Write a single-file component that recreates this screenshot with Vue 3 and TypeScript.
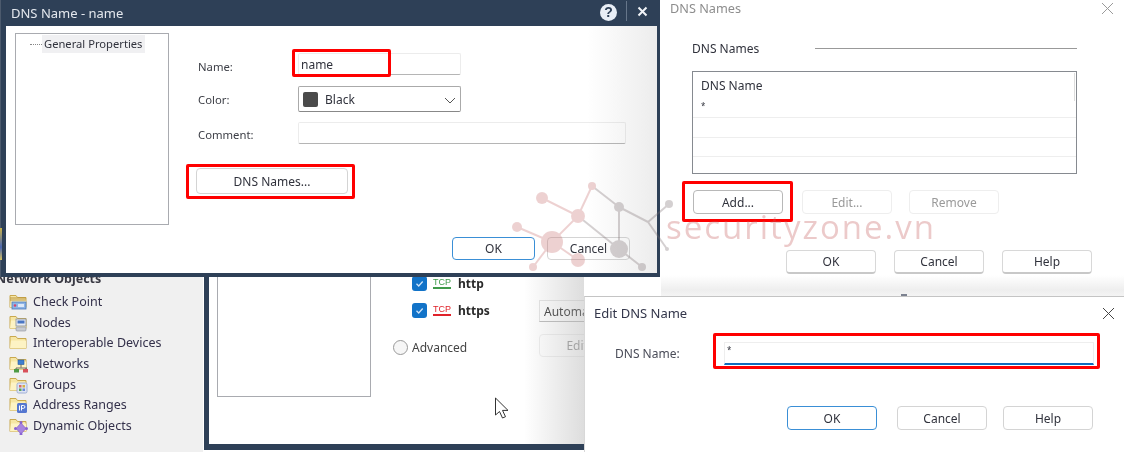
<script setup lang="ts">
interface NetItem { name: string; kind: string }
const netItems: NetItem[] = [
  { name: 'Check Point', kind: 'cp' },
  { name: 'Nodes', kind: 'node' },
  { name: 'Interoperable Devices', kind: 'plain' },
  { name: 'Networks', kind: 'net' },
  { name: 'Groups', kind: 'group' },
  { name: 'Address Ranges', kind: 'ip' },
  { name: 'Dynamic Objects', kind: 'dyn' },
]
const redNodes = [[542, 198, 6], [517, 227, 5], [552, 242, 11], [578, 216, 7], [578, 260, 7], [533, 267, 4], [592, 186, 4]]
const grayNodes = [[619, 207, 5], [619, 249, 9], [642, 267, 4], [669, 204, 4], [667, 249, 2]]
const redLinks = [[542, 198, 578, 216], [517, 227, 552, 242], [552, 242, 578, 216], [578, 216, 592, 186], [552, 242, 533, 267], [552, 242, 578, 260]]
const grayLinks = [[592, 186, 619, 207], [619, 207, 648, 222], [648, 222, 669, 204], [648, 222, 667, 249], [619, 207, 619, 249], [578, 216, 619, 249], [619, 249, 642, 267]]
</script>

<template>
  <div class="canvas">
    <!-- left tree behind the dialogs -->
    <aside class="objects">
      <h3 class="objects-title">Network Objects</h3>
      <ul class="objects-list">
        <li v-for="item in netItems" :key="item.name" class="objects-item">
          <svg class="folder" width="19" height="19" viewBox="0 0 19 19">
            <path d="M1 3.5h6l1.5 2H17v10H1z" fill="#f6e6a4" stroke="#c9a94f" stroke-width="1" />
            <path d="M2 7.5h15v8H1z" fill="#fdf3c4" />
            <template v-if="item.kind === 'cp'">
              <path d="M1 6h16M1 8h16" stroke="#b8923c" stroke-width="1" />
              <rect x="3" y="10" width="14" height="7" fill="#8db4e6" stroke="#4c79b8" stroke-width=".8" />
              <circle cx="6" cy="13.5" r="1.3" fill="#d8436c" />
              <rect x="9" y="12" width="6" height="3" fill="#dce8f8" />
            </template>
            <template v-else-if="item.kind === 'node'">
              <rect x="7" y="6" width="10" height="7" fill="#e8ecf2" stroke="#848d9c" stroke-width=".8" />
              <rect x="8.500" y="7.500" width="7" height="3" fill="#4a76c4" />
              <rect x="7" y="14" width="10" height="4" rx="1" fill="#c8cbd1" stroke="#8d929b" stroke-width=".6" />
            </template>
            <template v-else-if="item.kind === 'net'">
              <rect x="9" y="6" width="6" height="4.500" fill="#3f7fd0" stroke="#2a5a9c" stroke-width=".6" />
              <path d="M12 10.500v3M7 14h11M7 14v1M17 14v1" stroke="#4a4a4a" stroke-width=".8" fill="none" />
              <rect x="5" y="15" width="5" height="3.500" fill="#4d9a45" />
              <rect x="14" y="15" width="5" height="3.500" fill="#d8505a" />
            </template>
            <template v-else-if="item.kind === 'group'">
              <rect x="8" y="8" width="10" height="10" rx="1.500" fill="#dfe5f3" stroke="#8ea1cf" stroke-width=".8" />
              <rect x="10" y="10" width="2.500" height="2.500" fill="#d96a6a" />
              <rect x="13.500" y="10" width="2.500" height="2.500" fill="#d6b045" />
              <rect x="10" y="13.500" width="2.500" height="2.500" fill="#5aa65a" />
              <rect x="13.500" y="13.500" width="2.500" height="2.500" fill="#6a8ad8" />
            </template>
            <template v-else-if="item.kind === 'ip'">
              <rect x="8" y="8" width="10" height="10" rx="1.500" fill="#5577d0" />
              <path d="M10.500 10.500v5M12.500 15.500v-5h2a1.300 1.300 0 0 1 0 2.800h-2" stroke="#fff" stroke-width="1" fill="none" />
            </template>
            <template v-else-if="item.kind === 'dyn'">
              <path d="M12 7l5 5.500-5 5.500-5-5.500z" fill="#a884e0" stroke="#7d57c4" stroke-width=".6" />
              <circle cx="12" cy="6.500" r="1.500" fill="#8a63d2" />
              <circle cx="12" cy="18" r="1.500" fill="#8a63d2" />
              <circle cx="6.500" cy="12.500" r="1.500" fill="#8a63d2" />
              <circle cx="17.500" cy="12.500" r="1.500" fill="#8a63d2" />
            </template>
          </svg>
          <span>{{ item.name }}</span>
        </li>
      </ul>
    </aside>

    <!-- background properties window -->
    <section class="backdrop">
      <div class="backdrop-box"></div>
      <div class="backdrop-form">
        <div class="svc">
          <span class="check"><svg width="11" height="11" viewBox="0 0 11 11"><path d="M2.500 5.800l2.200 2.200 4-4.500" stroke="#cfe4fa" stroke-width="1.300" fill="none" /></svg></span>
          <span class="tcp tcp-green">TCP</span>
          <b class="svc-name">http</b>
        </div>
        <div class="svc svc-second">
          <span class="check"><svg width="11" height="11" viewBox="0 0 11 11"><path d="M2.500 5.800l2.200 2.200 4-4.500" stroke="#cfe4fa" stroke-width="1.300" fill="none" /></svg></span>
          <span class="tcp tcp-red">TCP</span>
          <b class="svc-name">https</b>
          <span class="auto">Automatic</span>
        </div>
        <div class="adv">
          <span class="radio"></span>
          <span class="adv-label">Advanced</span>
          <span class="adv-btn">Edit...</span>
        </div>
      </div>
      <svg class="cursor" width="16" height="23" viewBox="0 0 16 23">
        <path d="M1.500 1v17l4-3.500 3 6.500 3-1.300-3-6.300h5.500z" fill="#fff" stroke="#333" stroke-width="1" />
      </svg>
      <div class="shade-right"></div>
    </section>

    <!-- main dialog -->
    <section class="main-dlg">
      <span class="sliver"></span>
      <header class="main-title">
        <span class="main-title-text">DNS Name - name</span>
        <span class="help">?</span>
        <span class="sep"></span>
        <svg class="main-close" width="11" height="11" viewBox="0 0 11 11">
          <path d="M1.500 1.500l8 8M9.500 1.500l-8 8" stroke="#f1f4f8" stroke-width="2" />
        </svg>
      </header>
      <div class="main-body">
        <div class="tree">
          <div class="tree-row"><span class="tree-dots"></span><span class="tree-sel">General Properties</span></div>
        </div>
        <div class="form">
          <div class="form-grid">
            <label class="lbl lbl-low">Name:</label>
            <div class="marked">
              <div class="field field-short">name</div>
              <span class="mark mark-name"></span>
            </div>
            <label class="lbl">Color:</label>
            <div class="field field-short select">
              <span class="swatch"></span>
              <span>Black</span>
              <svg class="chev" width="12" height="7" viewBox="0 0 12 7"><path d="M1 1l5 5 5-5" stroke="#555" fill="none" /></svg>
            </div>
            <label class="lbl lbl-low">Comment:</label>
            <div class="field field-long"></div>
          </div>
          <div class="marked dns-wrap">
            <button class="btn dns-btn" type="button">DNS Names...</button>
            <span class="mark mark-dns"></span>
          </div>
          <div class="main-foot">
            <button class="btn btn-primary main-btn" type="button">OK</button>
            <button class="btn main-btn" type="button">Cancel</button>
          </div>
        </div>
        <div class="shade-main"></div>
      </div>
    </section>

    <!-- DNS Names window -->
    <section class="names-dlg">
      <header class="names-title">
        <span>DNS Names</span>
        <svg width="13" height="13" viewBox="0 0 13 13"><path d="M1 1l11 11M12 1L1 12" stroke="#9a9a9a" stroke-width="1" /></svg>
      </header>
      <div class="names-section">
        <span>DNS Names</span>
        <span class="names-line"></span>
      </div>
      <div class="names-list">
        <div class="names-head">DNS Name</div>
        <div class="names-row names-row-first">*</div>
        <div class="names-row"></div>
        <div class="names-row"></div>
        <div class="names-scroll"></div>
      </div>
      <div class="names-actions">
        <div class="marked">
          <button class="btn names-btn btn-strong" type="button">Add...</button>
          <span class="mark mark-add"></span>
        </div>
        <button class="btn names-btn btn-off" type="button">Edit...</button>
        <button class="btn names-btn btn-off" type="button">Remove</button>
      </div>
      <div class="names-foot">
        <button class="btn names-btn btn-raised" type="button">OK</button>
        <button class="btn names-btn btn-raised" type="button">Cancel</button>
        <button class="btn names-btn btn-raised" type="button">Help</button>
      </div>
      <span class="names-dot"></span>
    </section>

    <!-- Edit DNS Name window -->
    <section class="edit-dlg">
      <header class="edit-title">
        <span>Edit DNS Name</span>
        <svg width="13" height="13" viewBox="0 0 13 13"><path d="M1 1l11 11M12 1L1 12" stroke="#444" stroke-width="1" /></svg>
      </header>
      <div class="edit-row">
        <label class="edit-label">DNS Name:</label>
        <div class="marked">
          <div class="edit-input">*</div>
          <span class="mark mark-edit"></span>
        </div>
      </div>
      <div class="edit-foot">
        <button class="btn btn-primary edit-btn" type="button">OK</button>
        <button class="btn edit-btn" type="button">Cancel</button>
        <button class="btn edit-btn edit-btn-last" type="button">Help</button>
      </div>
    </section>

    <!-- watermark over everything -->
    <svg class="wm" width="1124" height="452" viewBox="0 0 1124 452">
      <line v-for="(l, i) in redLinks" :key="'r' + i" :x1="l[0]" :y1="l[1]" :x2="l[2]" :y2="l[3]" stroke="#c97474" stroke-width="2" />
      <line v-for="(l, i) in grayLinks" :key="'g' + i" :x1="l[0]" :y1="l[1]" :x2="l[2]" :y2="l[3]" stroke="#7d6f72" stroke-width="2" />
      <circle v-for="(n, i) in redNodes" :key="'rn' + i" :cx="n[0]" :cy="n[1]" :r="n[2]" fill="#c97474" />
      <circle v-for="(n, i) in grayNodes" :key="'gn' + i" :cx="n[0]" :cy="n[1]" :r="n[2]" fill="#7d6f72" />
    </svg>
    <span class="wm-text">securityzone.vn</span>
  </div>
</template>

<style>
html, body { margin: 0; background: #fff; }
</style>

<style scoped>
.canvas {
  position: relative;
  width: 1124px;
  height: 452px;
  overflow: hidden;
  background: #fff;
  font-family: "Noto Sans", "Open Sans", sans-serif;
  font-size: 12px;
  color: #30323c;
  filter: blur(0.35px);
}
.btn {
  font: inherit;
  color: inherit;
  background: #fff;
  border: 1px solid #d4d4d4;
  border-radius: 4px;
  padding: 0;
  display: block;
  box-sizing: border-box;
}
.btn-primary { border: 1.500px solid #3a8fd6; }
.btn-raised { border-color: #d8d8d8; border-bottom: 2px solid #c8c8c8; }
.btn-strong { border-color: #b8b8b8; }
.btn-off { border-color: #eeeeee; color: #9a9a9a; }
.marked { position: relative; }
.mark {
  position: absolute;
  box-sizing: border-box;
  border: 3px solid #f00;
  border-radius: 2px;
  pointer-events: none;
}

/* left tree */
.objects {
  position: absolute;
  left: 0;
  top: 266px;
  width: 203px;
  height: 186px;
  background: #f0f0f0;
}
.objects-title {
  margin: 0;
  position: absolute;
  left: -4px;
  top: 4px;
  font-size: 12.500px;
  font-weight: 700;
  color: #3a3a44;
}
.objects-list {
  list-style: none;
  margin: 0;
  padding: 25.500px 0 0 9px;
}
.objects-item {
  display: flex;
  align-items: center;
  gap: 5px;
  height: 20.600px;
  font-size: 12.500px;
  color: #33304a;
}
.folder { flex: none; }

/* backdrop window */
.backdrop {
  position: absolute;
  left: 204px;
  top: 260px;
  width: 380px;
  height: 190px;
  box-sizing: border-box;
  border-left: 5px solid #2e4057;
  border-bottom: 6px solid #2e4057;
  background: #fff;
  display: flex;
  padding-left: 8px;
}
.backdrop-box {
  width: 154px;
  height: 137px;
  box-sizing: border-box;
  border: 1px solid #a9abb0;
  flex: none;
}
.backdrop-form {
  margin-left: 22px;
  padding-top: 15px;
  flex: 1;
  display: flex;
  flex-direction: column;
  min-width: 0;
}
.svc {
  display: flex;
  align-items: center;
  height: 16px;
  padding-left: 19px;
  gap: 6px;
}
.svc-second { margin-top: 11px; position: relative; }
.check {
  width: 15px;
  height: 15px;
  border-radius: 3px;
  background: #1273c8;
  display: flex;
  align-items: center;
  justify-content: center;
}
.tcp {
  font-family: "Liberation Sans", sans-serif;
  font-size: 9px;
  width: 18px;
  height: 12px;
  line-height: 10px;
  text-align: center;
  box-sizing: border-box;
  border-bottom: 2px solid;
}
.tcp-green { color: #3f9a4a; border-color: #3f9a4a; }
.tcp-red { color: #e0222a; border-color: #e0222a; }
.svc-name { font-size: 12px; color: #2a2a2a; margin-left: 1px; }
.auto {
  position: absolute;
  left: 146px;
  top: -2px;
  width: 60px;
  height: 22px;
  line-height: 22px;
  padding-left: 4px;
  box-sizing: border-box;
  border: 1px solid #e4e4e4;
  border-bottom-color: #bbb;
  white-space: nowrap;
  overflow: hidden;
  color: #333;
}
.adv {
  display: flex;
  align-items: center;
  margin-top: 21px;
  position: relative;
  height: 16px;
}
.radio {
  width: 15px;
  height: 15px;
  border-radius: 50%;
  box-sizing: border-box;
  border: 1.500px solid #999;
  background: #f6f6f6;
}
.adv-label { margin-left: 4px; color: #444; }
.adv-btn {
  position: absolute;
  left: 146px;
  top: -5px;
  width: 86px;
  height: 23px;
  line-height: 22px;
  text-align: center;
  box-sizing: border-box;
  border: 1px solid #eee;
  border-radius: 4px;
  color: #999;
}
.cursor { position: absolute; left: 285px; top: 137px; }
.shade-right {
  position: absolute;
  right: 0;
  top: 0;
  bottom: 0;
  width: 60px;
  background: linear-gradient(to right, rgba(180, 180, 180, 0), rgba(180, 180, 180, .45));
}

/* main dialog */
.main-dlg {
  position: absolute;
  left: 0;
  top: 0;
  width: 660px;
  height: 277px;
  box-sizing: border-box;
  background: #2e4057;
  border-left: 1px solid #4c5a6d;
  padding: 0 3px 4px 5px;
  display: flex;
  flex-direction: column;
}
.sliver {
  position: absolute;
  left: -1px;
  top: 228px;
  width: 2px;
  height: 32px;
  background: linear-gradient(to bottom, #c9b24a, #4a66b0 60%, #d6c060);
}
.main-title {
  height: 26px;
  flex: none;
  display: flex;
  align-items: center;
  color: #e4e8ee;
  font-size: 13px;
  box-sizing: border-box;
}
.main-title-text { flex: 1; margin-left: 5px; }
.help {
  width: 17px;
  height: 17px;
  border-radius: 50%;
  background: #e8eef6;
  color: #2e4057;
  font-family: "Liberation Sans", sans-serif;
  font-weight: 700;
  font-size: 14px;
  line-height: 17px;
  text-align: center;
  margin: -2px 0 0 1px;
}
.sep {
  width: 1px;
  height: 20px;
  background: #66768a;
  margin: -4px 0 0 9px;
}
.main-close { margin: -4px 9px 0 10px; }
.main-body {
  position: relative;
  flex: 1;
  background: #fff;
  display: flex;
  padding: 7px 27px 0 9px;
  min-height: 0;
}
.tree {
  width: 154px;
  height: 192px;
  flex: none;
  box-sizing: border-box;
  border: 1px solid #a9abb0;
}
.tree-row { display: flex; align-items: center; height: 18px; margin-top: 1px; }
.tree-dots {
  width: 12px;
  margin-left: 14px;
  border-top: 1px dotted #888;
}
.tree-sel {
  background: #f0f0f2;
  padding: 0 3px 0 2px;
  height: 18px;
  line-height: 17px;
  white-space: nowrap;
  font-size: 11.200px;
}
.form {
  flex: 1;
  margin-left: 29px;
  display: flex;
  flex-direction: column;
  min-width: 0;
}
.form-grid {
  margin-top: 20px;
  display: grid;
  grid-template-columns: 100px 1fr;
  grid-template-rows: 22px 26px 22px;
  align-items: center;
  row-gap: 11px;
}
.lbl { color: #3e4048; font-size: 11.300px; }
.lbl-low { padding-top: 4px; }
.form-grid > :nth-child(n + 5) { margin-top: -3px; }
.field {
  box-sizing: border-box;
  border: 1px solid #ececec;
  border-bottom-color: #b5b5b5;
  border-radius: 2px;
  display: flex;
  align-items: center;
  padding-left: 2px;
}
.field-short { width: 163px; height: 22px; }
.field-long { width: 328px; height: 22px; }
.select {
  height: 26px;
  border: 1px solid #aaa;
  border-bottom-color: #888;
  padding-left: 4px;
  gap: 7px;
  position: relative;
}
.swatch {
  width: 15px;
  height: 15px;
  border-radius: 2px;
  background: #4a4a4a;
}
.chev { position: absolute; right: 4px; top: 10px; }
.mark-name { left: -6px; top: -4px; width: 99px; height: 28px; }
.dns-wrap { margin: 23px 0 0 -2px; width: 152px; }
.dns-btn { width: 152px; height: 26px; }
.mark-dns { left: -10px; top: -4px; width: 169px; height: 35px; }
.main-foot {
  margin-top: 43px;
  display: flex;
  justify-content: flex-end;
  gap: 12px;
}
.main-btn { width: 83px; height: 23px; }
.shade-main {
  position: absolute;
  right: 0;
  top: 0;
  bottom: 0;
  width: 70px;
  pointer-events: none;
  background: linear-gradient(to right, rgba(170, 170, 170, 0), rgba(170, 170, 170, .22));
}

/* names window */
.names-dlg {
  position: absolute;
  left: 661px;
  top: 0;
  width: 463px;
  height: 296px;
  background: linear-gradient(to bottom, #fff 93%, #eeeeee 98%, #f4f4f4);
  font-size: 12px;
}
.names-title {
  height: 16px;
  display: flex;
  justify-content: space-between;
  align-items: center;
  padding: 0 10px 0 9px;
  color: #8d8d8d;
  font-size: 12.700px;
}
.names-section {
  margin: 23px 0 0 31px;
  height: 18px;
  display: flex;
  align-items: center;
  position: relative;
}
.names-line {
  position: absolute;
  left: 123px;
  top: 9px;
  width: 262px;
  height: 1px;
  background: #999;
}
.names-list {
  position: relative;
  margin: 14px 0 0 31px;
  width: 385px;
  height: 103px;
  box-sizing: border-box;
  border: 1px solid #868a90;
  padding: 4px 0 0;
}
.names-head { height: 20px; line-height: 20px; padding-left: 8px; }
.names-row {
  height: 19.500px;
  box-sizing: border-box;
  border-bottom: 1px solid #eeeeee;
  padding-left: 8px;
  line-height: 19px;
  font-size: 8px;
}
.names-row-first { height: 22px; }
.names-scroll {
  position: absolute;
  right: 1px;
  top: 1px;
  width: 1px;
  height: 28px;
  background: #ddd;
}
.names-actions {
  margin: 16px 0 0 32px;
  display: flex;
  gap: 17px;
}
.names-actions .marked { margin-right: 2px; }
.names-btn { width: 90px; height: 24px; }
.mark-add { left: -11px; top: -9px; width: 111px; height: 41px; }
.names-foot {
  margin: 36px 0 0 125px;
  display: flex;
  gap: 18px;
}
.names-dot {
  position: absolute;
  left: 240px;
  bottom: 0;
  width: 6px;
  height: 2px;
  background: #7c8290;
}

/* edit window */
.edit-dlg {
  position: absolute;
  left: 584px;
  top: 296px;
  width: 540px;
  height: 156px;
  box-sizing: border-box;
  background: #fff;
  border-top: 1px solid #c4c4c4;
  border-left: 1px solid #d8d8d8;
}
.edit-title {
  height: 32px;
  display: flex;
  align-items: center;
  justify-content: space-between;
  padding: 0 9px 0 9px;
  color: #33364a;
  font-size: 13px;
}
.edit-row {
  margin-top: 13px;
  display: flex;
  align-items: center;
  padding-left: 30px;
}
.edit-label { width: 109px; flex: none; color: #4a4c58; }
.edit-input {
  width: 370px;
  height: 23px;
  box-sizing: border-box;
  border: 1px solid #eeeeee;
  border-bottom: 2px solid #0f6cbd;
  padding-left: 2px;
  line-height: 13px;
  font-size: 8px;
}
.mark-edit { left: -11px; top: -9px; width: 387px; height: 36px; }
.edit-foot {
  margin: 41px 0 0 202px;
  display: flex;
  gap: 20px;
}
.edit-btn { width: 90px; height: 24px; }
.edit-btn-last { margin-left: -4px; }

/* watermark */
.wm {
  position: absolute;
  left: 0;
  top: 0;
  pointer-events: none;
  opacity: .32;
}
.wm-text {
  position: absolute;
  left: 666px;
  top: 207px;
  font-family: "Open Sans", sans-serif;
  font-size: 33px;
  letter-spacing: 2px;
  line-height: 40px;
  color: rgba(195, 90, 90, .32);
  pointer-events: none;
  white-space: nowrap;
}
</style>
